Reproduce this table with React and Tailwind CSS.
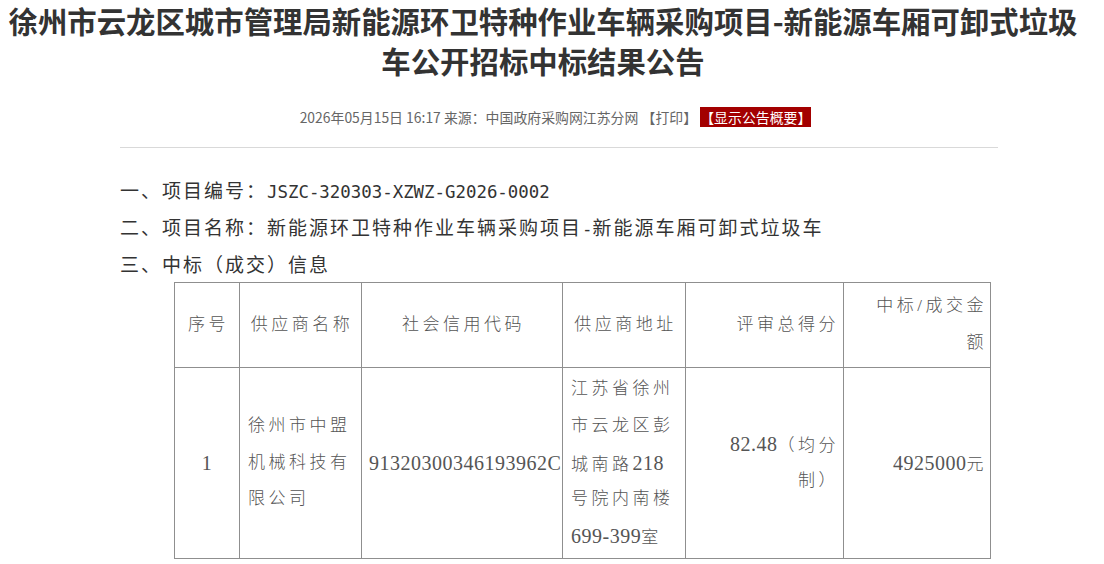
export default function App() {
  const tableFont = { fontFamily: '"Liberation Serif", "Noto Sans CJK SC", serif' };
  const mono = "font-['DejaVu_Sans_Mono'] text-[17.4px] tracking-normal";
  const num = "text-[20px] tracking-[0.5px]";
  const L = ({ children }) => <div className="h-[36.8px] leading-[36.8px] whitespace-nowrap">{children}</div>;
  const cell = "border border-[#8f8f8f] align-middle";
  return (
    <div className="w-[1104px] bg-white text-[#333] font-['Noto_Sans_CJK_SC',sans-serif]">
      <h1 className="w-[1086px] text-center text-[29.4px] leading-[40px] font-bold text-[#333]">
        徐州市云龙区城市管理局新能源环卫特种作业车辆采购项目-新能源车厢可卸式垃圾
        <br />
        车公开招标中标结果公告
      </h1>
      <div className="mt-[27px] h-[20px] pl-[7px] text-center text-[13.9px] leading-[20px] text-[#666]">
        2026年05月15日 16:17 来源：中国政府采购网江苏分网 【打印】{" "}
        <span className="bg-[#a30000] text-white">【显示公告概要】</span>
      </div>
      <div className="ml-[120px] w-[878px]">
        <div className="mt-[20px] h-px bg-[#d9d9d9]" />
        <div className="mt-[23px] text-[19px] tracking-[2px] text-[#333]">
          <div className="h-[37px] leading-[37px] whitespace-nowrap">
            一、项目编号：<span className={mono}>JSZC-320303-XZWZ-G2026-0002</span>
          </div>
          <div className="h-[37px] leading-[37px] whitespace-nowrap">
            二、项目名称：新能源环卫特种作业车辆采购项目<span className={mono}>-</span>新能源车厢可卸式垃圾车
          </div>
          <div className="h-[37px] leading-[37px] whitespace-nowrap">三、中标（成交）信息</div>
        </div>
        <table
          style={tableFont}
          className="ml-[54px] w-[816px] table-fixed border-collapse text-[17px] tracking-[3.5px] text-[#555] font-light"
        >
          <colgroup>
            <col className="w-[65px]" />
            <col className="w-[122px]" />
            <col className="w-[201px]" />
            <col className="w-[123px]" />
            <col className="w-[158px]" />
            <col className="w-[147px]" />
          </colgroup>
          <tbody>
            <tr className="h-[85px]">
              <td className={`${cell} text-center pl-[3px]`}><L>序号</L></td>
              <td className={`${cell} text-center pl-[3px]`}><L>供应商名称</L></td>
              <td className={`${cell} text-center pl-[3px]`}><L>社会信用代码</L></td>
              <td className={`${cell} text-center pl-[3px]`}><L>供应商地址</L></td>
              <td className={`${cell} text-right pr-[4px]`}><L>评审总得分</L></td>
              <td className={`${cell} text-right pr-[3px]`}>
                <L>中标/成交金</L>
                <L>额</L>
              </td>
            </tr>
            <tr className="h-[191px]">
              <td className={`${cell} text-center`}>
                <L><span className={num}>1</span></L>
              </td>
              <td className={`${cell} text-left pl-[8px]`}>
                <L>徐州市中盟</L>
                <L>机械科技有</L>
                <L>限公司</L>
              </td>
              <td className={`${cell} text-left pl-[7px]`}>
                <L><span className={num}>91320300346193962C</span></L>
              </td>
              <td className={`${cell} text-left pl-[8px]`}>
                <L>江苏省徐州</L>
                <L>市云龙区彭</L>
                <L>城南路<span className={num}>218</span></L>
                <L>号院内南楼</L>
                <L><span className={num}>699-399</span>室</L>
              </td>
              <td className={`${cell} text-right pr-[4px]`}>
                <L><span className={num}>82.48</span>（均分</L>
                <L>制）</L>
              </td>
              <td className={`${cell} text-right pr-[3px]`}>
                <L><span className={num}>4925000</span>元</L>
              </td>
            </tr>
          </tbody>
        </table>
      </div>
    </div>
  );
}
